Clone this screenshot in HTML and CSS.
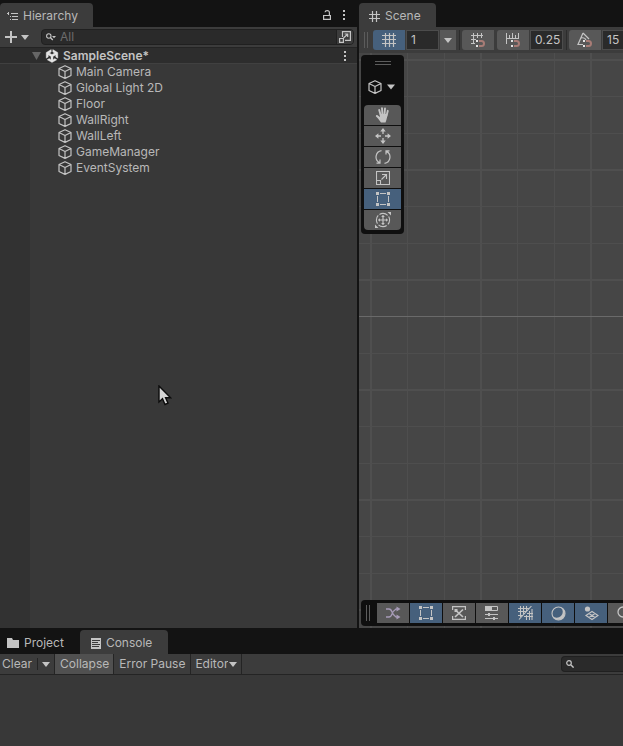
FILE: index.html
```html
<!DOCTYPE html>
<html lang="en">

<head>
    <meta charset="UTF-8">
    <meta name="viewport" content="width=device-width, initial-scale=1.0">
    <title>SampleScene - Editor</title>
    <link rel="stylesheet" href="styles.css">
</head>

<body>
    <!-- Shared icons -->
    <svg class="sprite" width="0" height="0" aria-hidden="true">
        <symbol id="cube" viewBox="0 0 14 14">
            <path d="M7 .7 13 3.5V10.5L7 13.4 1 10.5V3.5ZM1 3.5 7 6.5 13 3.5M7 6.5V13.4" fill="none" stroke="currentColor" stroke-width="1.2" stroke-linejoin="round" />
        </symbol>
        <symbol id="caret" viewBox="0 0 8 5">
            <path d="M0 0H8L4 5Z" fill="currentColor" />
        </symbol>
        <symbol id="dots" viewBox="0 0 4 12">
            <path d="M1 1H3V3H1ZM1 5H3V7H1ZM1 9H3V11H1Z" fill="currentColor" />
        </symbol>
        <symbol id="grid" viewBox="0 0 14 14">
            <path d="M3.5 0V14M7.5 0V14M11.5 0V14M0 2.5H14M0 6.5H14M0 10.5H14" fill="none" stroke="currentColor" stroke-width="1.2" />
        </symbol>
        <symbol id="magnet" viewBox="0 0 9 7">
            <path d="M3 1H5.5A2.5 2.5 0 0 1 5.5 6H3" fill="none" stroke="#a87c76" stroke-width="2" />
            <path d="M0 0H2V2H0ZM0 5H2V7H0Z" fill="#e4e4e4" />
        </symbol>
        <symbol id="rect" viewBox="0 0 14 14">
            <path d="M0 0H3V3H0ZM11 0H14V3H11ZM0 11H3V14H0ZM11 11H14V14H11Z" fill="currentColor" />
            <path d="M4 1.5H10M4 12.5H10M1.5 4V10M12.5 4V10" fill="none" stroke="currentColor" />
        </symbol>
        <symbol id="search" viewBox="0 0 8 8">
            <path d="M5 5 7.6 7.6" stroke="currentColor" stroke-width="1.4" />
            <circle cx="3" cy="3" r="2.3" fill="none" stroke="currentColor" stroke-width="1.2" />
        </symbol>
    </svg>

    <div class="editor">
        <section class="panel hierarchy">
            <div class="tab-bar">
                <button class="tab active">
                    <svg width="11" height="9" viewBox="0 0 11 9"><path d="M0 1.5H2M4 1.5H11M3 4.5H4M5 4.5H11M3 7.5H4M5 7.5H11M1.5 0V3" fill="none" stroke="currentColor" /></svg>
                    Hierarchy
                </button>
                <div class="tab-actions">
                    <button class="icon-button" aria-label="Lock">
                        <svg width="8" height="10" viewBox="0 0 8 10"><path d="M.6 5.5H7.4V9.4H.6ZM6.4 5.5V2.6Q6.4.6 4.2.6 2.2.6 2 2.3" fill="none" stroke="currentColor" stroke-width="1.2" /></svg>
                    </button>
                    <button class="icon-button" aria-label="Panel menu"><svg width="4" height="12"><use href="#dots" /></svg></button>
                </div>
            </div>
            <div class="hierarchy-toolbar">
                <button class="add-button" aria-label="Add object">
                    <svg width="12" height="12" viewBox="0 0 12 12"><path d="M6 0V12M0 6H12" stroke="currentColor" stroke-width="2" /></svg>
                    <svg width="8" height="5"><use href="#caret" /></svg>
                </button>
                <div class="search-box">
                    <svg width="10" height="8" viewBox="0 0 10 8">
                        <circle cx="2.8" cy="3" r="2.2" fill="none" stroke="currentColor" stroke-width="1.1" />
                        <path d="M4.5 4.7 6.8 7" stroke="currentColor" stroke-width="1.3" />
                        <path d="M6 3H10L8 5.2Z" fill="currentColor" />
                    </svg>
                    <input type="text" placeholder="All" aria-label="Search hierarchy">
                    <button class="pick-button" aria-label="Open search window">
                        <svg width="12" height="12" viewBox="0 0 12 12"><path d="M3.5 6V.6H11.4V9.4H6M.6 7.5H4.4V11.4H.6ZM4.5 7 8.5 3.2M5.6 3H8.7V6" fill="none" stroke="currentColor" stroke-width="1.2" /></svg>
                    </button>
                </div>
            </div>
            <div class="scene-row">
                <svg class="fold" width="9" height="8" viewBox="0 0 9 8"><path d="M0 0H9L4.5 8Z" fill="currentColor" /></svg>
                <svg width="14" height="14" viewBox="0 0 14 14">
                    <path d="M6.2 .6V3L4.4 4.1 7 5.6 9.6 4.1 7.8 3V.6L12.8 3.5V9.2L10.8 8V5.9L8 7.5V10.7L9.8 9.6 11.8 10.8 7 13.5 2.2 10.8 4.2 9.6 6 10.7V7.5L3.2 5.9V8L1.2 9.2V3.5Z" fill="#e4e4e4" stroke="#e4e4e4" stroke-width=".4" />
                </svg>
                <span class="scene-name">SampleScene*</span>
                <button class="icon-button" aria-label="Scene menu"><svg width="4" height="12"><use href="#dots" /></svg></button>
            </div>
            <ul class="objects">
                <li><svg width="14" height="14"><use href="#cube" /></svg>Main Camera</li>
                <li><svg width="14" height="14"><use href="#cube" /></svg>Global Light 2D</li>
                <li><svg width="14" height="14"><use href="#cube" /></svg>Floor</li>
                <li><svg width="14" height="14"><use href="#cube" /></svg>WallRight</li>
                <li><svg width="14" height="14"><use href="#cube" /></svg>WallLeft</li>
                <li><svg width="14" height="14"><use href="#cube" /></svg>GameManager</li>
                <li><svg width="14" height="14"><use href="#cube" /></svg>EventSystem</li>
            </ul>
        </section>

        <section class="panel scene">
            <div class="tab-bar">
                <button class="tab active">
                    <svg width="11" height="11" viewBox="0 0 11 11"><path d="M3.5 0V11M7.5 0V11M0 3.5H11M0 7.5H11" fill="none" stroke="currentColor" stroke-width="1.2" /></svg>
                    Scene
                </button>
            </div>
            <div class="scene-toolbar">
                <span class="grip"></span>
                <div class="tool-group">
                    <button class="tool on" aria-label="Show grid"><svg width="14" height="14"><use href="#grid" /></svg></button>
                    <input type="text" value="1" aria-label="Grid size">
                    <button class="tool narrow" aria-label="Grid options"><svg width="8" height="5"><use href="#caret" /></svg></button>
                </div>
                <div class="tool-group divided">
                    <button class="tool" aria-label="Snap to grid">
                        <svg width="16" height="16" viewBox="0 0 16 16">
                            <path d="M3.5 1V12M7.5 1V6M11.5 1V6M1 3.5H13M1 7.5H6M1 11.5H5" fill="none" stroke="currentColor" />
                            <use href="#magnet" x="6" y="8" width="9" height="7" />
                        </svg>
                    </button>
                </div>
                <div class="tool-group">
                    <button class="tool" aria-label="Increment snapping">
                        <svg width="16" height="16" viewBox="0 0 16 16">
                            <path d="M1.5 1V12M13.5 1V7M1 6.5H14M4.5 3V6M7.5 1V6M10.5 3V6" fill="none" stroke="currentColor" />
                            <use href="#magnet" x="6" y="8" width="9" height="7" />
                        </svg>
                    </button>
                    <input type="text" value="0.25" aria-label="Move increment">
                </div>
                <div class="tool-group divided">
                    <button class="tool" aria-label="Angle snapping">
                        <svg width="16" height="16" viewBox="0 0 16 16">
                            <path d="M6 1 1 12.5H6M6 1 12 7M4 6Q8 5 9 8" fill="none" stroke="currentColor" stroke-width="1.2" />
                            <use href="#magnet" x="6" y="8" width="9" height="7" />
                        </svg>
                    </button>
                    <input type="text" value="15" aria-label="Rotate increment">
                </div>
            </div>

            <div class="viewport">
                <svg class="grid-lines" width="100%" height="100%" aria-hidden="true">
                    <defs>
                        <pattern id="cells" width="110" height="110" patternUnits="userSpaceOnUse">
                            <path d="M12 0V110" stroke="#4f4f4f" stroke-width="2" />
                            <path d="M48.5 0V110M85.5 0V110M0 43.5H110M0 80.5H110" stroke="#4e4e4e" />
                            <path d="M0 7H110" stroke="#4f4f4f" stroke-width="2" />
                        </pattern>
                    </defs>
                    <rect width="100%" height="100%" fill="url(#cells)" />
                    <path d="M0 263.5H4000" stroke="#6a6a6a" />
                </svg>

                <div class="tools-overlay">
                    <span class="grip flat"></span>
                    <button class="tool-mode" aria-label="Tool settings">
                        <svg width="14" height="14"><use href="#cube" /></svg>
                        <svg width="8" height="6"><use href="#caret" /></svg>
                    </button>
                    <div class="tool-list">
                        <button class="tool" aria-label="View tool">
                            <svg width="16" height="16" viewBox="0 0 16 16">
                                <path d="M4.2 3 5.6 8M7 1.2 7.5 8M10 1.5 9.5 8M12.8 3.8 11.5 9" stroke="currentColor" stroke-width="1.9" stroke-linecap="round" />
                                <path d="M4.8 7H12.4L12 10.5Q11.5 13 10.5 15.5H6Q4.5 13.5 3 11.5L.8 9.2Q.8 7.8 2.2 8L5 10Z" fill="currentColor" />
                            </svg>
                        </button>
                        <button class="tool" aria-label="Move tool">
                            <svg width="16" height="16" viewBox="0 0 16 16">
                                <path d="M8 2V6M8 10V14M2 8H6M10 8H14" stroke="currentColor" stroke-width="1.3" />
                                <path d="M8 0 10.7 3.4H5.3ZM8 16 10.7 12.6H5.3ZM0 8 3.4 5.3V10.7ZM16 8 12.6 5.3V10.7Z" fill="currentColor" />
                            </svg>
                        </button>
                        <button class="tool" aria-label="Rotate tool">
                            <svg width="16" height="16" viewBox="0 0 16 16">
                                <path d="M6.5 1.6A6.4 6.4 0 0 0 4.5 13.6M9.5 14.4A6.4 6.4 0 0 0 11.5 2.4M1.5 14.2H5V10.5M14.5 1.8H11V5.5" fill="none" stroke="currentColor" stroke-width="1.2" />
                            </svg>
                        </button>
                        <button class="tool" aria-label="Scale tool">
                            <svg width="14" height="14" viewBox="0 0 14 14"><path d="M.5.5H13.5V13.5H.5ZM.5 9.5H4.5V13.5M5.5 8.5 10 4M6 3.5H10.5V8" fill="none" stroke="currentColor" stroke-width="1.1" /></svg>
                        </button>
                        <button class="tool on" aria-label="Rect tool"><svg width="14" height="14"><use href="#rect" /></svg></button>
                        <button class="tool" aria-label="Transform tool">
                            <svg width="16" height="16" viewBox="0 0 16 16">
                                <circle cx="8" cy="8" r="6.6" fill="none" stroke="currentColor" stroke-width="1.1" stroke-dasharray="8.8 1.6" stroke-dashoffset="4" />
                                <path d="M8 4V12M4 8H12" stroke="currentColor" stroke-width="1.2" />
                                <path d="M8 2.8 9.8 5H6.2ZM8 13.2 9.8 11H6.2ZM2.8 8 5 6.2V9.8ZM13.2 8 11 6.2V9.8ZM16 0V3.5L12.5 0ZM0 16V12.5L3.5 16Z" fill="currentColor" />
                            </svg>
                        </button>
                    </div>
                </div>

                <div class="options-overlay">
                    <span class="grip"></span>
                    <button class="tool" aria-label="Draw mode">
                        <svg width="16" height="14" viewBox="0 0 16 14"><path d="M1 3H4Q6 3 7 6T11 11H13M1 11H4Q6 11 7 8T11 3H13" fill="none" stroke="#a79bb8" stroke-width="1.3" /><path d="M11.5.5 15.5 3 11.5 5.5ZM11.5 8.5 15.5 11 11.5 13.5Z" fill="#a79bb8" /></svg>
                    </button>
                    <button class="tool on" aria-label="2D mode"><svg width="14" height="14"><use href="#rect" /></svg></button>
                    <button class="tool" aria-label="Gizmo tools">
                        <svg width="14" height="14" viewBox="0 0 14 14">
                            <path d="M.6 4V.6H13.4V4M.6 10V13.4H13.4V10" fill="none" stroke="currentColor" stroke-width="1.2" />
                            <path d="M3 11 11 3.5M4.5 5 11 11" stroke="currentColor" stroke-width="1.7" />
                            <path d="M2.5 3H5.5V6H2.5Z" fill="currentColor" />
                        </svg>
                    </button>
                    <button class="tool" aria-label="Overlays">
                        <svg width="14" height="14" viewBox="0 0 14 14">
                            <path d="M.5.5H12.5V4.5H.5ZM0 8.5H13M0 12.5H13" fill="none" stroke="currentColor" />
                            <path d="M0 0H7V5H0ZM3 7H5V10H3ZM8 11H10V14H8Z" fill="currentColor" />
                        </svg>
                    </button>
                    <button class="tool on" aria-label="Grid visibility">
                        <svg width="15" height="14" viewBox="0 0 15 14"><path d="M2.5 0V11M5.5 0V8M8.5 0V5M0 2.5H11M0 5.5H8M0 9.5H5M8.5 9V14M11.5 5V14M14 3V14M6 10.5H15M9 7.5H15M1 13.5 13.5 0" fill="none" stroke="currentColor" stroke-width="1.1" /></svg>
                    </button>
                    <button class="tool on" aria-label="Lighting">
                        <svg width="15" height="15" viewBox="0 0 15 15"><circle cx="7.5" cy="7.5" r="6.5" fill="none" stroke="currentColor" stroke-width="1.1" /><path d="M10 1.4A6.5 6.5 0 1 1 1.4 10 6 6 0 0 0 10 1.4Z" fill="currentColor" /></svg>
                    </button>
                    <button class="tool on" aria-label="Effects">
                        <svg width="15" height="15" viewBox="0 0 15 15"><circle cx="3.5" cy="3" r="2.6" fill="currentColor" /><path d="M8 5.5 14 9.5 8 13.5 2 9.5ZM5 7.5 11 11.5M11 7.5 5 11.5" fill="none" stroke="currentColor" stroke-width="1.2" /></svg>
                    </button>
                    <button class="tool" aria-label="Visibility">
                        <svg width="14" height="14" viewBox="0 0 14 14"><circle cx="6" cy="6" r="5" fill="none" stroke="currentColor" stroke-width="1.3" /><path d="M10 10 13 13" stroke="currentColor" stroke-width="1.3" /></svg>
                    </button>
                </div>
            </div>
        </section>

        <section class="panel console">
            <div class="tab-bar">
                <button class="tab">
                    <svg width="12" height="10" viewBox="0 0 12 10"><path d="M0 0H5L6 2H12V10H0Z" fill="currentColor" /></svg>
                    Project
                </button>
                <button class="tab active">
                    <svg width="10" height="11" viewBox="0 0 10 11"><path d="M0 0H10V11H0Z" fill="currentColor" /><path d="M1 2.5H9M1 4.5H7M1 6.5H9M1 8.5H8" stroke="#3c3c3c" /></svg>
                    Console
                </button>
            </div>
            <div class="console-toolbar">
                <button class="clear">Clear</button>
                <button class="clear-menu" aria-label="Clear options"><svg width="8" height="5"><use href="#caret" /></svg></button>
                <button class="pressed">Collapse</button>
                <button>Error Pause</button>
                <div class="dropdown">
                    <select aria-label="Log target">
                        <option>Editor</option>
                    </select>
                    <svg width="8" height="5"><use href="#caret" /></svg>
                </div>
                <div class="search-box">
                    <svg width="8" height="8"><use href="#search" /></svg>
                    <input type="text" aria-label="Search console">
                </div>
            </div>
        </section>
    </div>

    <svg class="cursor" width="14" height="21" viewBox="0 0 14 21" aria-hidden="true">
        <path d="M1 1V17L4.5 13.8 7 19.5 10 18.2 7.6 12.8H12.6Z" fill="#d4d4d4" stroke="#0c0c0c" stroke-width="1.4" />
    </svg>
</body>

</html>
```
FILE: styles.css
```css
* {
    box-sizing: border-box;
}

body {
    margin: 0;
    background-color: #131313;
    color: #b8b8b8;
    font-family: Inter, "Liberation Sans", sans-serif;
    font-size: 12px;
    line-height: 16px;
    overflow: hidden;
}

button,
input,
select {
    margin: 0;
    padding: 0;
    border: none;
    background: none;
    color: inherit;
    font: inherit;
}

svg {
    display: block;
    flex: none;
    color: #c4c4c4;
}

.sprite {
    position: absolute;
}

.editor {
    display: grid;
    grid-template-columns: 357fr 264fr;
    grid-template-rows: 628fr 118fr;
    column-gap: 2px;
    height: 100vh;
}

.panel {
    display: flex;
    flex-direction: column;
    min-width: 0;
    min-height: 0;
    overflow: hidden;
}

/* Tabs */
.tab-bar {
    display: flex;
    flex: none;
    align-items: flex-end;
    height: 27px;
}

.tab {
    display: flex;
    align-items: center;
    gap: 5px;
    height: 24px;
    padding: 2px 15px 0 7px;
    border-radius: 4px 4px 0 0;
}

.tab.active {
    background-color: #3c3c3c;
}

.tab-actions {
    display: flex;
    align-items: center;
    gap: 11px;
    height: 24px;
    margin-left: auto;
    padding-right: 11px;
}

/* Hierarchy */
.hierarchy {
    background-color: #383838;
}

.hierarchy .tab-bar {
    background-color: #131313;
}

.hierarchy-toolbar {
    display: flex;
    flex: none;
    gap: 12px;
    height: 20px;
    padding: 2px 3px 2px 5px;
    background-color: #3c3c3c;
}

.add-button {
    display: flex;
    align-items: center;
    gap: 4px;
}

.search-box {
    display: flex;
    flex: 1;
    align-items: center;
    gap: 4px;
    min-width: 0;
    padding-left: 4px;
    border: 1px solid #202020;
    border-radius: 4px;
    background-color: #2a2a2a;
    overflow: hidden;
}

.search-box input {
    flex: 1;
    min-width: 0;
    outline: none;
}

.search-box input::placeholder {
    color: #6c6c6c;
}

.pick-button {
    align-self: stretch;
    padding: 0 2px;
    border-left: 1px solid #202020;
    background-color: #3c3c3c;
}

.scene-row {
    display: flex;
    flex: none;
    align-items: center;
    gap: 4px;
    height: 17px;
    padding: 0 10px 0 32px;
    border-top: 1px solid #242424;
    border-bottom: 1px solid #404040;
    background-color: #2d2d2d;
}

.scene-row .fold {
    color: #666;
}

.scene-name {
    flex: 1;
    font-weight: 600;
    color: #c4c4c4;
}

.objects {
    flex: 1;
    margin: 0;
    padding: 0 0 0 28px;
    border-left: 30px solid #323232;
    list-style: none;
}

.objects li {
    display: flex;
    align-items: center;
    gap: 4px;
    height: 16px;
}

/* Scene */
.scene .tab {
    padding-left: 10px;
}

.scene-toolbar {
    display: flex;
    flex: none;
    gap: 3px;
    height: 26px;
    padding: 3px 0 3px 5px;
    background-color: #3c3c3c;
}

.grip {
    flex: none;
    width: 4px;
    height: 16px;
    margin: 2px 2px 0 0;
    border: solid #5c5c5c;
    border-width: 0 1px;
}

.grip.flat {
    width: 16px;
    height: 4px;
    margin: 0;
    border-width: 1px 0;
}

.tool-group {
    display: flex;
    flex: none;
    gap: 1px;
}

.tool-group.divided {
    padding-left: 2px;
    border-left: 1px solid #2c2c2c;
}

.tool {
    display: flex;
    flex: none;
    align-items: center;
    justify-content: center;
    width: 32px;
    height: 20px;
    background-color: #585858;
}

.tool.narrow {
    width: 16px;
}

.tool.on {
    background-color: #46607c;
}

.tool-group .tool:first-child {
    border-radius: 3px 0 0 3px;
}

.tool-group input {
    width: 33px;
    padding-left: 4px;
    border: 1px solid #4c4c4c;
    background-color: #2a2a2a;
    color: #c4c4c4;
}

.viewport {
    position: relative;
    flex: 1;
    min-height: 0;
    background-color: #464646;
}

.tools-overlay {
    position: absolute;
    top: 2px;
    left: 2px;
    display: flex;
    flex-direction: column;
    align-items: center;
    padding: 6px 3px 4px;
    border-radius: 4px;
    background-color: #0f0f0f;
}

.grid-lines {
    position: absolute;
}

.tool-mode {
    display: flex;
    align-items: center;
    gap: 5px;
    height: 14px;
    margin: 15px 0 11px;
    padding-right: 2px;
}

.tool-list {
    display: grid;
    gap: 1px;
    border-radius: 4px;
    overflow: hidden;
}

.tool-list .tool {
    width: 37px;
}

.options-overlay {
    position: absolute;
    right: 0;
    bottom: 2px;
    left: 2px;
    display: flex;
    gap: 1px;
    padding: 3px 0 3px 5px;
    border-radius: 4px 0 0 4px;
    background-color: #0f0f0f;
    overflow: hidden;
}

.options-overlay .grip {
    margin-right: 6px;
}

/* Console */
.console {
    grid-column: 1 / -1;
    background-color: #383838;
}

.console .tab-bar {
    height: 26px;
    background-color: #131313;
}

.console .tab {
    padding-right: 16px;
}

.console .tab.active {
    padding-left: 11px;
}

.console-toolbar {
    display: flex;
    flex: none;
    height: 21px;
    border-bottom: 1px solid #242424;
    background-color: #3c3c3c;
}

.console-toolbar > button {
    padding: 0 5px;
    border-right: 1px solid #242424;
}

.console-toolbar > .clear {
    margin: 4px 0;
    padding: 0 5px 0 2px;
    line-height: 12px;
}

.console-toolbar > .clear-menu {
    padding: 0 4px;
}

.console-toolbar > .pressed {
    padding: 0 4px 0 5px;
    background-color: #505050;
}

.dropdown {
    position: relative;
    display: flex;
    align-items: center;
    border-right: 1px solid #242424;
}

.dropdown select {
    padding: 0 13px 0 4px;
    appearance: none;
}

.dropdown svg {
    position: absolute;
    right: 4px;
    pointer-events: none;
}

.console .search-box {
    flex: none;
    width: 10%;
    margin: 2px 0 2px auto;
    border-right: none;
    border-radius: 4px 0 0 4px;
}

.cursor {
    position: absolute;
    top: 385px;
    left: 158px;
}
```
